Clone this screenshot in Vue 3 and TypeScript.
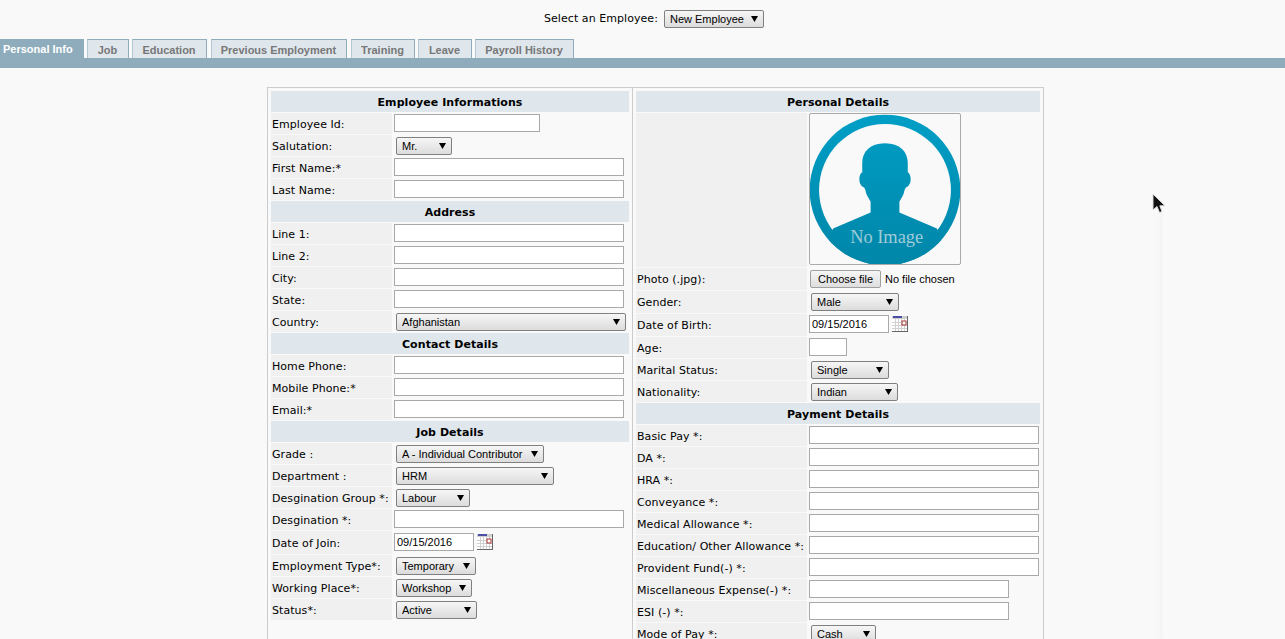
<template>
  <div class="page">
    <div class="topBar">
      <label class="topLabel">Select an Employee:</label>
      <span class="selWrap topSel">
        <select><option>New Employee</option></select>
        <svg class="arrow" viewBox="0 0 8 8"><path d="M0 1h8L4 8z" /></svg>
      </span>
    </div>

    <div class="tabs">
      <a
        v-for="(t, i) in tabs"
        :key="t.name"
        :class="['tab', { active: i === 0 }]"
        :style="{ width: t.w + 'px', marginRight: t.gap + 'px' }"
      >{{ t.name }}</a>
    </div>
    <div class="tabBar"></div>

    <div class="sheet">
      <div class="col leftCol">
        <template v-for="s in leftSections" :key="s.title">
          <div class="head">{{ s.title }}</div>
          <div v-for="r in s.rows" :key="r.label" :class="['row', r.cls]">
            <div class="lab">{{ r.label }}</div>
            <div class="val">
              <span v-if="r.select" class="selWrap" :style="{ width: r.w + 'px' }">
                <select><option>{{ r.select }}</option></select>
                <svg class="arrow" viewBox="0 0 8 8"><path d="M0 1h8L4 8z" /></svg>
              </span>
              <input v-else type="text" class="inp" :value="r.value" :style="{ width: r.w + 'px' }" />
              <svg v-if="r.cal" class="cal" viewBox="0 0 16 16">
                <rect width="16" height="16" fill="#666" />
                <rect x="0" y="0" width="15" height="15" fill="#fff" />
                <rect x="0" y="0" width="15" height="3" fill="#cfcfcf" />
                <rect x="1" y="0" width="9" height="2" fill="#4a4fa5" />
                <path d="M0 6.5h15M0 9.5h15M0 12.5h15M3.5 3v12M6.5 3v12M9.5 3v12M12.5 3v12" stroke="#d0d0d0" fill="none" />
                <rect x="10" y="5" width="4" height="4" fill="#fff" stroke="#a33" />
              </svg>
            </div>
          </div>
        </template>
      </div>

      <div class="col rightCol">
        <div class="head">Personal Details</div>
        <div class="row photoRow">
          <div class="lab"></div>
          <div class="val">
            <div class="photo">
              <svg viewBox="538 85 454 454" width="152" height="152">
                <defs>
                  <linearGradient id="blue" gradientUnits="userSpaceOnUse" x1="0" y1="90" x2="0" y2="540">
                    <stop offset="0" stop-color="#009ec6" />
                    <stop offset="1" stop-color="#0086a8" />
                  </linearGradient>
                  <clipPath id="disc"><circle cx="765" cy="315" r="225" /></clipPath>
                </defs>
                <circle cx="765" cy="315" r="225" fill="url(#blue)" />
                <circle cx="765" cy="315" r="197" fill="#f9f9f9" />
                <path
                  clip-path="url(#disc)"
                  fill="url(#blue)"
                  d="M765 175C720 175 697 200 697 235V262C685 268 685 300 700 306C708 310 706 322 712 332L722 350V382L610 430L560 560H970L920 430L808 382V350L818 332C824 322 822 310 830 306C845 300 845 268 833 262V235C833 200 810 175 765 175Z"
                />
                <text x="770" y="474" text-anchor="middle" class="noImage">No Image</text>
              </svg>
            </div>
          </div>
        </div>
        <div class="row r22">
          <div class="lab">Photo (.jpg):</div>
          <div class="val fileVal">
            <button type="button" class="fileBtn">Choose file</button>
            <span>No file chosen</span>
          </div>
        </div>
        <div class="row r22">
          <div class="lab">Gender:</div>
          <div class="val">
            <span class="selWrap" :style="{ width: '88px' }">
              <select><option>Male</option></select>
              <svg class="arrow" viewBox="0 0 8 8"><path d="M0 1h8L4 8z" /></svg>
            </span>
          </div>
        </div>
        <div class="row r22">
          <div class="lab">Date of Birth:</div>
          <div class="val">
            <input type="text" class="inp" value="09/15/2016" :style="{ width: '80px' }" />
            <svg class="cal" viewBox="0 0 16 16">
              <rect width="16" height="16" fill="#666" />
              <rect x="0" y="0" width="15" height="15" fill="#fff" />
              <rect x="0" y="0" width="15" height="3" fill="#cfcfcf" />
              <rect x="1" y="0" width="9" height="2" fill="#4a4fa5" />
              <path d="M0 6.5h15M0 9.5h15M0 12.5h15M3.5 3v12M6.5 3v12M9.5 3v12M12.5 3v12" stroke="#d0d0d0" fill="none" />
              <rect x="10" y="5" width="4" height="4" fill="#fff" stroke="#a33" />
            </svg>
          </div>
        </div>
        <div v-for="r in rightRows" :key="r.label" class="row">
          <div class="lab">{{ r.label }}</div>
          <div class="val">
            <span v-if="r.select" class="selWrap" :style="{ width: r.w + 'px' }">
              <select><option>{{ r.select }}</option></select>
              <svg class="arrow" viewBox="0 0 8 8"><path d="M0 1h8L4 8z" /></svg>
            </span>
            <input v-else type="text" class="inp" :style="{ width: r.w + 'px' }" />
          </div>
        </div>
        <div class="head">Payment Details</div>
        <div v-for="r in payRows" :key="r.label" class="row">
          <div class="lab">{{ r.label }}</div>
          <div class="val">
            <span v-if="r.select" class="selWrap" :style="{ width: r.w + 'px' }">
              <select><option>{{ r.select }}</option></select>
              <svg class="arrow" viewBox="0 0 8 8"><path d="M0 1h8L4 8z" /></svg>
            </span>
            <input v-else type="text" class="inp" :style="{ width: r.w + 'px' }" />
          </div>
        </div>
      </div>
    </div>

    <!-- faint trail left under the pointer -->
    <div class="trail"></div>
    <svg class="cursor" width="16" height="22" viewBox="0 0 16 22">
      <path d="M1 1V17L5 13.5L7.5 19.5L10 18.5L7.8 12.8H13Z" fill="#111" stroke="#ddd" stroke-width="1" />
    </svg>
  </div>
</template>

<script setup lang="ts">
interface Row {
  label: string;
  w: number;
  select?: string;
  value?: string;
  cal?: boolean;
  cls?: string;
}

const tabs = [
  { name: 'Personal Info', w: 84, gap: 3 },
  { name: 'Job', w: 42, gap: 3 },
  { name: 'Education', w: 75, gap: 4 },
  { name: 'Previous Employment', w: 136, gap: 4 },
  { name: 'Training', w: 64, gap: 3 },
  { name: 'Leave', w: 54, gap: 3 },
  { name: 'Payroll History', w: 99, gap: 0 },
];

const leftSections: { title: string; rows: Row[] }[] = [
  {
    title: 'Employee Informations',
    rows: [
      { label: 'Employee Id:', w: 146 },
      { label: 'Salutation:', w: 56, select: 'Mr.' },
      { label: 'First Name:*', w: 230 },
      { label: 'Last Name:', w: 230 },
    ],
  },
  {
    title: 'Address',
    rows: [
      { label: 'Line 1:', w: 230 },
      { label: 'Line 2:', w: 230 },
      { label: 'City:', w: 230 },
      { label: 'State:', w: 230 },
      { label: 'Country:', w: 230, select: 'Afghanistan' },
    ],
  },
  {
    title: 'Contact Details',
    rows: [
      { label: 'Home Phone:', w: 230 },
      { label: 'Mobile Phone:*', w: 230 },
      { label: 'Email:*', w: 230 },
    ],
  },
  {
    title: 'Job Details',
    rows: [
      { label: 'Grade :', w: 148, select: 'A - Individual Contributor' },
      { label: 'Department :', w: 158, select: 'HRM' },
      { label: 'Desgination Group *:', w: 74, select: 'Labour' },
      { label: 'Desgination *:', w: 230 },
      { label: 'Date of Join:', w: 80, value: '09/15/2016', cal: true, cls: 'r23' },
      { label: 'Employment Type*:', w: 80, select: 'Temporary' },
      { label: 'Working Place*:', w: 76, select: 'Workshop' },
      { label: 'Status*:', w: 81, select: 'Active' },
    ],
  },
];

const rightRows: Row[] = [
  { label: 'Age:', w: 38 },
  { label: 'Marital Status:', w: 78, select: 'Single' },
  { label: 'Nationality:', w: 87, select: 'Indian' },
];

const payRows: Row[] = [
  { label: 'Basic Pay *:', w: 230 },
  { label: 'DA *:', w: 230 },
  { label: 'HRA *:', w: 230 },
  { label: 'Conveyance *:', w: 230 },
  { label: 'Medical Allowance *:', w: 230 },
  { label: 'Education/ Other Allowance *:', w: 230 },
  { label: 'Provident Fund(-) *:', w: 230 },
  { label: 'Miscellaneous Expense(-) *:', w: 200 },
  { label: 'ESI (-) *:', w: 200 },
  { label: 'Mode of Pay *:', w: 65, select: 'Cash' },
];
</script>

<style>
html,
body {
  margin: 0;
  background: #f9f9f9;
  overflow: hidden;
}
</style>

<style scoped>
.page {
  position: relative;
  height: 639px;
  overflow: hidden;
  font-family: "DejaVu Sans", sans-serif;
  font-size: 11px;
  letter-spacing: 0.06px;
  color: #000;
}

.topBar {
  display: flex;
  height: 18px;
  padding: 10px 0 0 544px;
  gap: 6px;
}

.topLabel {
  line-height: 18px;
}

.tabs {
  display: flex;
  height: 19px;
  margin-top: 11px;
}

.tab {
  display: block;
  box-sizing: border-box;
  height: 19px;
  padding-right: 1px;
  background: #dfe7ed;
  border-top: 1px solid #8eacbc;
  border-right: 1px solid #8eacbc;
  border-left: 1px solid #b4c8d3;
  font-family: "Liberation Sans", sans-serif;
  font-weight: bold;
  line-height: 20px;
  letter-spacing: 0;
  text-align: center;
  color: #777;
}

.tab.active {
  padding-left: 3px;
  background: #8eacbc;
  border: none;
  line-height: 21px;
  text-align: left;
  color: #fff;
}

.tabBar {
  height: 10px;
  background: #8eacbc;
}

.sheet {
  display: flex;
  box-sizing: border-box;
  width: 777px;
  height: 620px;
  margin: 19px 0 0 267px;
  border: 1px solid #ccc;
}

.col {
  display: flex;
  flex-direction: column;
  gap: 1px;
  padding-top: 3px;
  box-sizing: border-box;
}

.leftCol {
  width: 365px;
  padding-left: 3px;
  border-right: 1px solid #ccc;
}

.rightCol {
  width: 410px;
  padding-left: 3px;
}

.head {
  flex: none;
  height: 21px;
  width: 358px;
  background: #dfe7ed;
  font-weight: bold;
  text-align: center;
  line-height: 23px;
}

.rightCol .head {
  width: 404px;
}

.row {
  flex: none;
  display: flex;
  gap: 1px;
  height: 21px;
}

.r22 {
  height: 22px;
}

.r23 {
  height: 23px;
}

.photoRow {
  height: 154px;
}

.lab {
  flex: none;
  width: 121px;
  padding-left: 1px;
  box-sizing: border-box;
  background: #f0f0f0;
  line-height: 23px;
  white-space: nowrap;
}

.r22 .lab {
  line-height: 24px;
}

.r23 .lab {
  line-height: 25px;
}

.rightCol .lab {
  width: 171px;
}

.val {
  display: flex;
  align-items: flex-start;
  font-family: "Liberation Sans", sans-serif;
  letter-spacing: 0;
}

.inp {
  box-sizing: border-box;
  height: 18px;
  margin: 1px 0 0 1px;
  padding: 1px 2px;
  background: #fff;
  border: 1px solid #a9a9a9;
  border-radius: 0;
  font-family: "Liberation Sans", sans-serif;
  font-size: 11px;
  color: #000;
  outline: none;
}

.r23 .inp {
  margin-top: 2px;
}

.selWrap {
  position: relative;
  display: inline-block;
  height: 18px;
  margin: 2px 0 0 3px;
}

.topSel {
  width: 100px;
  margin: 0;
  letter-spacing: 0;
}

.selWrap select {
  display: block;
  box-sizing: border-box;
  width: 100%;
  height: 18px;
  margin: 0;
  padding: 0 14px 0 5px;
  appearance: none;
  background: linear-gradient(#f6f6f6, #dcdcdc);
  border: 1px solid #808080;
  border-radius: 2px;
  font-family: "Liberation Sans", sans-serif;
  font-size: 11px;
  color: #000;
}

.arrow {
  position: absolute;
  top: 5px;
  right: 6px;
  width: 7px;
  height: 7px;
  fill: #000;
  pointer-events: none;
}

.cal {
  width: 16px;
  height: 16px;
  margin: 2px 0 0 3px;
}

.r23 .cal {
  margin-top: 3px;
}

.photo {
  box-sizing: border-box;
  width: 152px;
  height: 152px;
  margin-left: 1px;
  overflow: hidden;
  border: 1px solid #a9a9a9;
  border-radius: 2px;
}

.photo svg {
  display: block;
  margin: -1px;
}

.noImage {
  font-family: "Liberation Serif", serif;
  font-size: 55px;
  fill: #9fcbd8;
}

.fileVal {
  gap: 4px;
  line-height: 22px;
}

.fileBtn {
  box-sizing: border-box;
  width: 71px;
  height: 18px;
  margin: 2px 0 0 2px;
  padding: 0;
  background: linear-gradient(#f6f6f6, #dedede);
  border: 1px solid #a0a0a0;
  border-radius: 2px;
  font-family: "Liberation Sans", sans-serif;
  font-size: 11px;
  color: #000;
}

.trail {
  position: absolute;
  left: 1152px;
  top: 212px;
  bottom: 0;
  width: 11px;
  background: linear-gradient(to right, #f9f9f9, #f7f7f7 60%, #f4f4f4 90%, #f8f8f8);
}

.cursor {
  position: absolute;
  left: 1152px;
  top: 193px;
}
</style>
